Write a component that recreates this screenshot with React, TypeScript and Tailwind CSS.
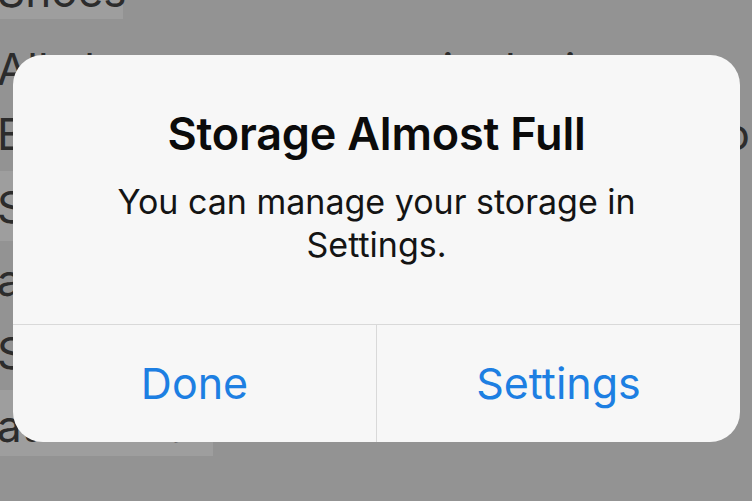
export default function App() {
  const lines = [
    { text: "Shoes", h: "h-[78px]", band: "w-[123px] h-[64px]", tail: "" },
    { text: "All she wanna put on is designer", h: "h-[65px]", band: "", tail: "" },
    { text: "Bags and the dresses", h: "h-[73px]", band: "", tail: "o" },
    { text: "She knows the price of it all", h: "h-[73px]", band: "w-[60px] h-[70px]", tail: "" },
    { text: "and she always sees it", h: "h-[73px]", band: "", tail: "" },
    { text: "She is out of control", h: "h-[73px]", band: "", tail: "" },
    { text: "at the mall", h: "h-[73px]", band: "w-[213px] h-[66px]", tail: "" },
  ];

  return (
    <div className="relative w-[752px] h-[501px] overflow-hidden bg-[#939393] font-['Inter',sans-serif]">
      {/* page behind the alert */}
      <div className="flex flex-col -mt-[45px] text-[44px] leading-[73px] text-[#2c2c2c] whitespace-nowrap">
        {lines.map((l, i) => (
          <div key={i} className={`relative flex ${l.h}`}>
            {l.band && <div className={`absolute left-0 top-0 bg-[#9e9e9e] ${l.band}`} />}
            <span className="relative -ml-[3px] h-[73px]">{l.text}</span>
            {l.tail && <span className="relative ml-auto pr-[2px] h-[73px]">{l.tail}</span>}
          </div>
        ))}
      </div>

      {/* alert */}
      <div className="absolute left-[13px] top-[55px] w-[727px] h-[387px] rounded-[30px] bg-[#f7f7f7] flex flex-col overflow-hidden">
        <div className="h-[269px] flex flex-col items-center pt-[54px]">
          <div className="text-[45px] leading-[50px] font-semibold text-[#0b0b0b] tracking-[-0.2px]">
            Storage Almost Full
          </div>
          <div className="mt-[21px] text-[34px] leading-[43px] text-[#141414] text-center w-[560px]">
            You can manage your storage in Settings.
          </div>
        </div>
        <div className="h-px bg-[#d9d9d9]" />
        <div className="flex flex-1">
          <button className="flex-1 flex items-center justify-center text-[43px] text-[#1d7fe2]">
            Done
          </button>
          <div className="w-px bg-[#d9d9d9]" />
          <button className="flex-1 flex items-center justify-center text-[43px] text-[#1d7fe2]">
            Settings
          </button>
        </div>
      </div>
    </div>
  );
}
